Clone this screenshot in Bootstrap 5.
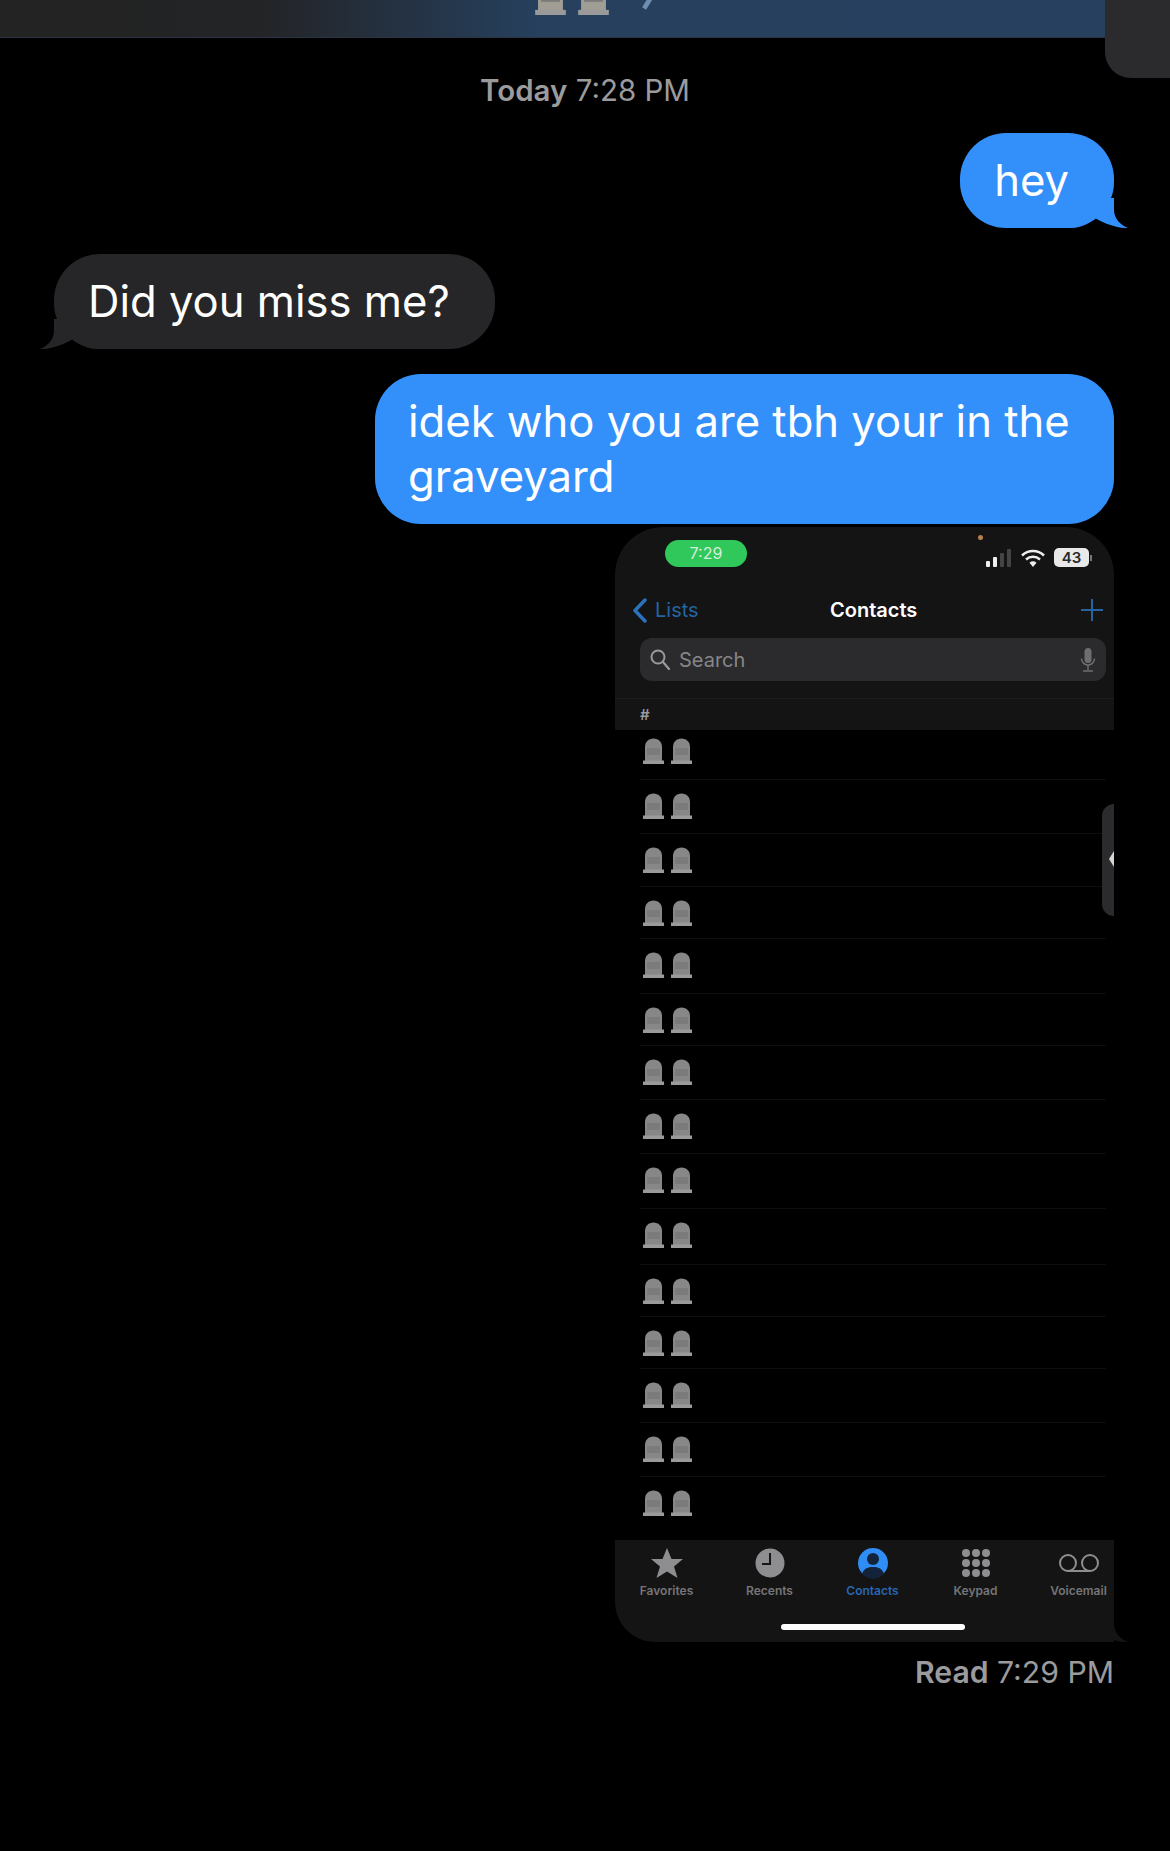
<!DOCTYPE html>
<html lang="en">
<head>
    <meta charset="UTF-8">
    <meta name="viewport" content="width=device-width, initial-scale=1.0">
    <title>Messages</title>
    <link href="https://cdn.jsdelivr.net/npm/bootstrap@5.3.0/dist/css/bootstrap.min.css" rel="stylesheet">
    <style>
        body {
            background: #000;
            font-family: Inter, "Liberation Sans", sans-serif;
            min-height: 1851px;
            overflow-x: hidden;
        }
        .top-strip {
            height: 38px;
            background: linear-gradient(90deg, #232323 0, #232426 260px, #26405e 540px, #27405f 100%);
            border-bottom: 1px solid #2c3444;
            overflow: hidden;
        }
        .top-stones { padding-left: 535px; gap: 12px; height: 15px; }
        .top-stones svg { width: 31px; height: 38px; flex: none; margin-top: -23px; color: #a09d95; }
        .top-chevron { width: 10px; height: 8px; margin-left: 20px; flex: none; }
        .corner-shape {
            position: absolute; top: 0; right: 0;
            width: 65px; height: 78px;
            background: #2b2b2d;
            border-bottom-left-radius: 26px;
        }
        .stamp { color: #9b9b9d; font-size: 29.500px; line-height: 36px; margin-top: 34px; }
        .stamp b, .read-line b { font-weight: 600; }
        .thread { padding: 0 56px 0 54px; }
        .bubble {
            position: relative;
            font-size: 43.600px;
            line-height: 55px;
            padding: 20px 45px 20px 34px;
            border-radius: 46px;
            color: #fff;
        }
        .bubble-out { background: #338ffa; }
        .bubble-in { background: #262628; }
        .bubble-wide { width: 739px; padding: 20px 34px 20px 33px; }
        .gap-a { margin-top: 25px; }
        .gap-b { margin-top: 26px; }
        .gap-c { margin-top: 25px; }
        .gap-d { margin-top: 3px; }
        .tail { position: absolute; bottom: 0; right: -14px; width: 58px; height: 30px; }
        .tail-in { right: auto; left: -14px; transform: scaleX(-1); }
        .shot {
            position: relative;
            width: 499px;
            background: #000;
            border-radius: 48px 48px 0 40px;
            color: #fff;
        }
        .shot-head { background: #141415; border-radius: 48px 48px 0 0; height: 203px; }
        .status-row { height: 63px; padding: 13px 22px 0 50px; }
        .clock-pill {
            width: 82px; height: 27px;
            background: #30c85a;
            border-radius: 14px;
            color: #d5efdc;
            font-size: 16px;
            line-height: 27px;
            text-align: center;
        }
        .cam-dot { width: 5px; height: 5px; border-radius: 50%; background: #b5804a; margin-top: -5px; margin-right: 3px; }
        .status-icons { gap: 9px; margin-top: 8px; }
        .batt {
            width: 35px; height: 19px;
            background: #e9e9e9;
            border-radius: 5px;
            color: #2a2a2a;
            font-size: 15px;
            font-weight: 600;
            line-height: 19px;
            text-align: center;
        }
        .batt-wrap { gap: 1px; }
        .batt-nub { width: 2px; height: 6px; background: #777; }
        .nav-row { height: 40px; padding-right: 11px; }
        .nav-left { flex: 0 0 215px; padding-left: 17px; color: #25649f; font-size: 20px; gap: 8px; }
        .nav-title { font-size: 20px; font-weight: 600; }
        .search-box {
            height: 43px;
            margin: 8px 8px 17px 25px;
            background: #2b2b2d;
            border-radius: 12px;
            color: #868688;
            font-size: 20px;
            padding: 0 10px;
            gap: 9px;
        }
        .hash-row {
            height: 32px;
            padding-left: 25px;
            border-top: 1px solid #1e1e1f;
            color: #9a9a9a;
            font-size: 15px;
            font-weight: 600;
            line-height: 32px;
        }
        .stone-row { padding: 13px 0 0 28px; gap: 7px; position: relative; }
        .stone-row:first-child { padding-top: 8px; }
        .stone-row svg { width: 21px; height: 26px; color: #878787; flex: none; }
        .stone-row::after {
            content: "";
            position: absolute; left: 25px; right: 8px; bottom: 0;
            height: 1px;
            background: #0e0e0e;
        }
        .stone-row:last-child::after { display: none; }
        .shot-tabs { background: #141415; height: 102px; border-bottom-left-radius: 40px; }
        .tab-grid { display: grid; grid-template-columns: repeat(5, 103px); padding-top: 7px; }
        .tab-cell { color: #757577; font-size: 12px; font-weight: 600; line-height: 14px; }
        .tab-cell svg { width: 34px; height: 32px; margin-bottom: 5px; }
        .tab-on { color: #2866b0; }
        .home-bar { width: 184px; height: 6px; margin: 26px 0 0 166px; background: #fff; border-radius: 3px; }
        .side-handle {
            position: absolute; top: 277px; right: 0;
            width: 12px; height: 112px;
            background: #2b2b2d;
            border-radius: 12px 0 0 12px;
        }
        .side-notch {
            position: absolute; top: 47px; right: 0;
            border: 8px solid transparent;
            border-left: 0;
            border-right: 5px solid #d5d5d5;
        }
        .read-line { color: #9b9b9d; font-size: 30.200px; line-height: 36px; margin-top: 12px; }
    </style>
</head>
<body>
    <svg width="0" height="0" class="position-absolute">
        <symbol id="stone" viewBox="0 0 21 26">
            <path fill="currentColor" d="M2 23V9C2 4 5.500 .5 10.500 .5S19 4 19 9V23z"/>
            <path fill="#7b7b7b" d="M4 10h13v7H4z"/>
            <path fill="#9a9a9a" d="M0 22.500h21V26H0z"/>
        </symbol>
        <symbol id="tail-shape" viewBox="0 0 58 30">
            <path fill="currentColor" d="M0 0H44V12C44 20 50 27 58 30C48 30.500 35 26 25 20C18 26 10 30 0 30z"/>
        </symbol>
    </svg>

    <div class="top-strip d-flex">
        <div class="top-stones d-flex">
            <svg><use href="#stone"/></svg>
            <svg><use href="#stone"/></svg>
            <svg class="top-chevron" viewBox="0 0 10 8"><path d="M1 8 L6 0" stroke="#6f8fb0" stroke-width="1.500" fill="none"/></svg>
        </div>
    </div>
    <div class="corner-shape"></div>

    <div class="stamp text-center"><b>Today</b> 7:28 PM</div>

    <div class="thread">
        <div class="d-flex justify-content-end gap-a">
            <div class="bubble bubble-out">hey
                <svg class="tail" style="color:#338ffa"><use href="#tail-shape"/></svg>
            </div>
        </div>
        <div class="d-flex gap-b">
            <div class="bubble bubble-in">Did you miss me?
                <svg class="tail tail-in" style="color:#262628"><use href="#tail-shape"/></svg>
            </div>
        </div>
        <div class="d-flex justify-content-end gap-c">
            <div class="bubble bubble-out bubble-wide">idek who you are tbh your in the graveyard</div>
        </div>

        <div class="d-flex justify-content-end gap-d">
            <div class="shot">
                <div class="shot-head">
                    <div class="status-row d-flex align-items-start justify-content-between">
                        <div class="clock-pill">7:29</div>
                        <div class="d-flex align-items-start">
                            <div class="cam-dot"></div>
                            <div class="status-icons d-flex align-items-center">
                                <svg width="26" height="18" viewBox="0 0 26 18">
                                    <rect x="0" y="12" width="4" height="6" rx="1" fill="#eee"/>
                                    <rect x="7" y="8" width="4" height="10" rx="1" fill="#eee"/>
                                    <rect x="14" y="4" width="4" height="14" rx="1" fill="#444"/>
                                    <rect x="21" y="0" width="4" height="18" rx="1" fill="#444"/>
                                </svg>
                                <svg width="24" height="18" viewBox="0 0 24 18">
                                    <path d="M1 6.500A16 16 0 0 1 23 6.500" stroke="#eee" stroke-width="2.500" fill="none"/>
                                    <path d="M5 10.500A10.500 10.500 0 0 1 19 10.500" stroke="#eee" stroke-width="2.500" fill="none"/>
                                    <path d="M12 18L8.500 13.800A5 5 0 0 1 15.500 13.800z" fill="#eee"/>
                                </svg>
                                <div class="batt-wrap d-flex align-items-center">
                                    <div class="batt">43</div>
                                    <div class="batt-nub"></div>
                                </div>
                            </div>
                        </div>
                    </div>
                    <div class="nav-row d-flex align-items-center">
                        <div class="nav-left d-flex align-items-center">
                            <svg width="15" height="25" viewBox="0 0 15 25"><path d="M13 2L3 12.500L13 23" stroke="#2a72ba" stroke-width="3.500" fill="none" stroke-linecap="round" stroke-linejoin="round"/></svg>
                            <span>Lists</span>
                        </div>
                        <div class="nav-title">Contacts</div>
                        <svg class="ms-auto" width="22" height="22" viewBox="0 0 22 22"><path d="M11 0V22M0 11H22" stroke="#25649f" stroke-width="2"/></svg>
                    </div>
                    <div class="search-box d-flex align-items-center">
                        <svg width="20" height="21" viewBox="0 0 20 21"><circle cx="8" cy="8" r="6.500" stroke="#9a9a9c" stroke-width="2" fill="none"/><path d="M13 13L19 20" stroke="#9a9a9c" stroke-width="2.200" stroke-linecap="round"/></svg>
                        <span>Search</span>
                        <svg class="ms-auto" width="16" height="24" viewBox="0 0 16 24"><rect x="4.500" y="0" width="7" height="15" rx="3.500" fill="#6e6e70"/><path d="M1.500 10.500A6.500 6.500 0 0 0 14.500 10.500M8 17V22M3 23H13" stroke="#6e6e70" stroke-width="1.500" fill="none"/></svg>
                    </div>
                    <div class="hash-row">#</div>
                </div>

                <div id="stone-list"></div>

                <div class="shot-tabs">
                    <div class="tab-grid">
                        <div class="tab-cell d-flex flex-column align-items-center">
                            <svg viewBox="0 0 34 32"><path fill="#8e8e90" d="M17 1L21.500 12H33L24 19.500L27.500 31L17 24.500L6.500 31L10 19.500L1 12H12.500z"/></svg>
                            <span>Favorites</span>
                        </div>
                        <div class="tab-cell d-flex flex-column align-items-center">
                            <svg viewBox="0 0 34 32"><circle cx="17" cy="16" r="14.500" fill="#8e8e90"/><path d="M17 6V17H9" stroke="#161616" stroke-width="2" fill="none"/></svg>
                            <span>Recents</span>
                        </div>
                        <div class="tab-cell tab-on d-flex flex-column align-items-center">
                            <svg viewBox="0 0 34 32"><circle cx="17" cy="16" r="15" fill="#2f8df5"/><circle cx="17" cy="12" r="6" fill="#12233a"/><path d="M6 27C8 21 12 20 17 20S26 21 28 27A15 15 0 0 1 6 27z" fill="#12233a"/></svg>
                            <span>Contacts</span>
                        </div>
                        <div class="tab-cell d-flex flex-column align-items-center">
                            <svg viewBox="0 0 34 32" fill="#8e8e90">
                                <circle cx="7" cy="6" r="4"/><circle cx="17" cy="6" r="4"/><circle cx="27" cy="6" r="4"/>
                                <circle cx="7" cy="16" r="4"/><circle cx="17" cy="16" r="4"/><circle cx="27" cy="16" r="4"/>
                                <circle cx="7" cy="26" r="4"/><circle cx="17" cy="26" r="4"/><circle cx="27" cy="26" r="4"/>
                            </svg>
                            <span>Keypad</span>
                        </div>
                        <div class="tab-cell d-flex flex-column align-items-center">
                            <svg viewBox="0 0 42 32" style="width:42px"><circle cx="10" cy="16" r="8" stroke="#8e8e90" stroke-width="2" fill="none"/><circle cx="32" cy="16" r="8" stroke="#8e8e90" stroke-width="2" fill="none"/><path d="M10 24H32" stroke="#8e8e90" stroke-width="2"/></svg>
                            <span>Voicemail</span>
                        </div>
                    </div>
                    <div class="home-bar"></div>
                </div>

                <svg class="tail" style="color:#141415"><use href="#tail-shape"/></svg>
                <div class="side-handle"><div class="side-notch"></div></div>
            </div>
        </div>

        <div class="read-line text-end"><b>Read</b> 7:29 PM</div>
    </div>

    <script src="https://cdn.jsdelivr.net/npm/bootstrap@5.3.0/dist/js/bootstrap.bundle.min.js"></script>
    <script>
        // row heights read off the screenshot, they are not quite even
        const rowHeights = [50, 54, 53, 52, 55, 52, 54, 54, 55, 56, 52, 52, 54, 54, 63];
        const list = document.getElementById('stone-list');
        rowHeights.forEach(function(h) {
            const row = document.createElement('div');
            row.className = 'stone-row d-flex';
            row.style.height = h + 'px';
            row.innerHTML = '<svg><use href="#stone"/></svg><svg><use href="#stone"/></svg>';
            list.appendChild(row);
        });
    </script>
</body>
</html>
